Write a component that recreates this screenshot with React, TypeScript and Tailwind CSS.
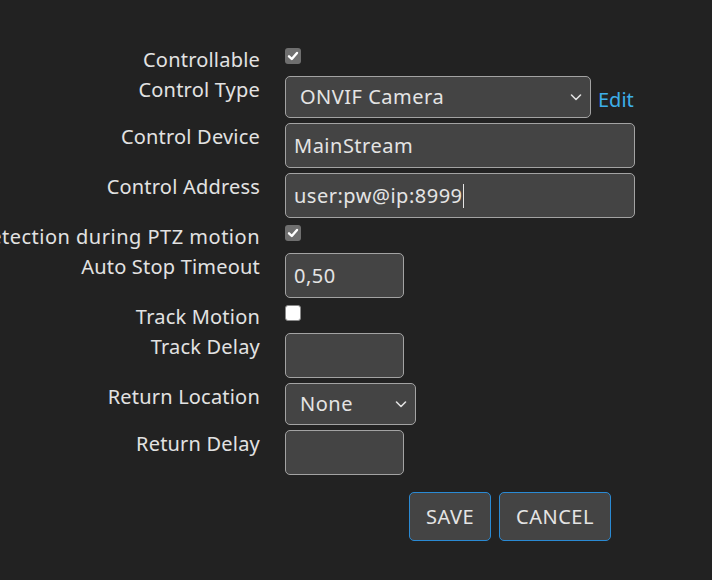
import React from "react";

function Check({ checked }: { checked: boolean }) {
  if (!checked) {
    return (
      <span className="mt-[4px] block h-[16px] w-[16px] rounded-[3px] border border-[#8a8a8a] bg-white" />
    );
  }
  return (
    <span className="mt-[4px] flex h-[16px] w-[16px] items-center justify-center rounded-[3px] bg-[#6f6f6f]">
      <svg width="12" height="12" viewBox="0 0 12 12">
        <path d="M2 6.3 L4.8 9 L10 3" fill="none" stroke="#fff" strokeWidth="2.4" strokeLinecap="round" strokeLinejoin="round" />
      </svg>
    </span>
  );
}

function Chevron() {
  return (
    <svg width="14" height="14" viewBox="0 0 14 14" className="shrink-0">
      <path d="M2.5 5 L7 9.5 L11.5 5" fill="none" stroke="#e0e0e0" strokeWidth="1.6" strokeLinecap="round" strokeLinejoin="round" />
    </svg>
  );
}

function Field({ value, width, caret }: { value?: string; width: string; caret?: boolean }) {
  return (
    <div
      className={`mt-[2px] flex h-[45px] items-center rounded-[5px] border border-[#a3a3a3] bg-[#444444] pl-[8px] tracking-[0.5px] text-[#e4e4e4] ${width}`}
    >
      <span>{value}</span>
      {caret && <span className="h-[24px] w-[1px] bg-[#e4e4e4]" />}
    </div>
  );
}

function Select({ value, width }: { value: string; width: string }) {
  return (
    <div
      className={`mt-[2px] flex h-[42px] items-center justify-between rounded-[5px] border border-[#a3a3a3] bg-[#444444] pl-[14px] pr-[7px] tracking-[0.5px] text-[#e4e4e4] ${width}`}
    >
      <span>{value}</span>
      <Chevron />
    </div>
  );
}

function Row({ label, wide, children }: { label: string; wide?: boolean; children: React.ReactNode }) {
  return (
    <div className="flex items-start gap-[25px]">
      <div
        className={`flex h-[27px] w-[260px] shrink-0 justify-end whitespace-nowrap leading-[31px] text-[#e2e2e2] ${
          wide ? "tracking-[0.5px]" : "tracking-[0.2px]"
        }`}
      >
        <span>{label}</span>
      </div>
      <div className="flex items-start">{children}</div>
    </div>
  );
}

export default function App() {
  return (
    <div
      className="h-[580px] w-[712px] overflow-hidden bg-[#222222] pt-[44px] text-[20px]"
      style={{ fontFamily: '"Noto Sans", "DejaVu Sans", sans-serif' }}
    >
      <div className="flex flex-col gap-[3px]">
        <Row label="Controllable">
          <Check checked />
        </Row>
        <Row label="Control Type">
          <Select value="ONVIF Camera" width="w-[306px]" />
          <span className="ml-[7px] mt-[12px] leading-[27px] text-[#3daee9]">Edit</span>
        </Row>
        <Row label="Control Device">
          <Field value="MainStream" width="w-[350px]" />
        </Row>
        <Row label="Control Address">
          <Field value="user:pw@ip:8999" width="w-[350px]" caret />
        </Row>
        <Row label="Motion Detection during PTZ motion" wide>
          <Check checked />
        </Row>
        <Row label="Auto Stop Timeout">
          <Field value="0,50" width="w-[119px]" />
        </Row>
        <Row label="Track Motion">
          <Check checked={false} />
        </Row>
        <Row label="Track Delay">
          <Field width="w-[119px]" />
        </Row>
        <Row label="Return Location">
          <Select value="None" width="w-[131px]" />
        </Row>
        <Row label="Return Delay">
          <Field width="w-[119px]" />
        </Row>
      </div>
      <div className="mt-[17px] flex gap-[8px] pl-[409px]">
        <button className="h-[49px] rounded-[5px] border border-[#2a8ad4] bg-[#444444] px-[16px] tracking-[0.5px] text-[#e4e4e4]">
          SAVE
        </button>
        <button className="h-[49px] rounded-[5px] border border-[#2a8ad4] bg-[#444444] px-[16px] tracking-[0.5px] text-[#e4e4e4]">
          CANCEL
        </button>
      </div>
    </div>
  );
}
